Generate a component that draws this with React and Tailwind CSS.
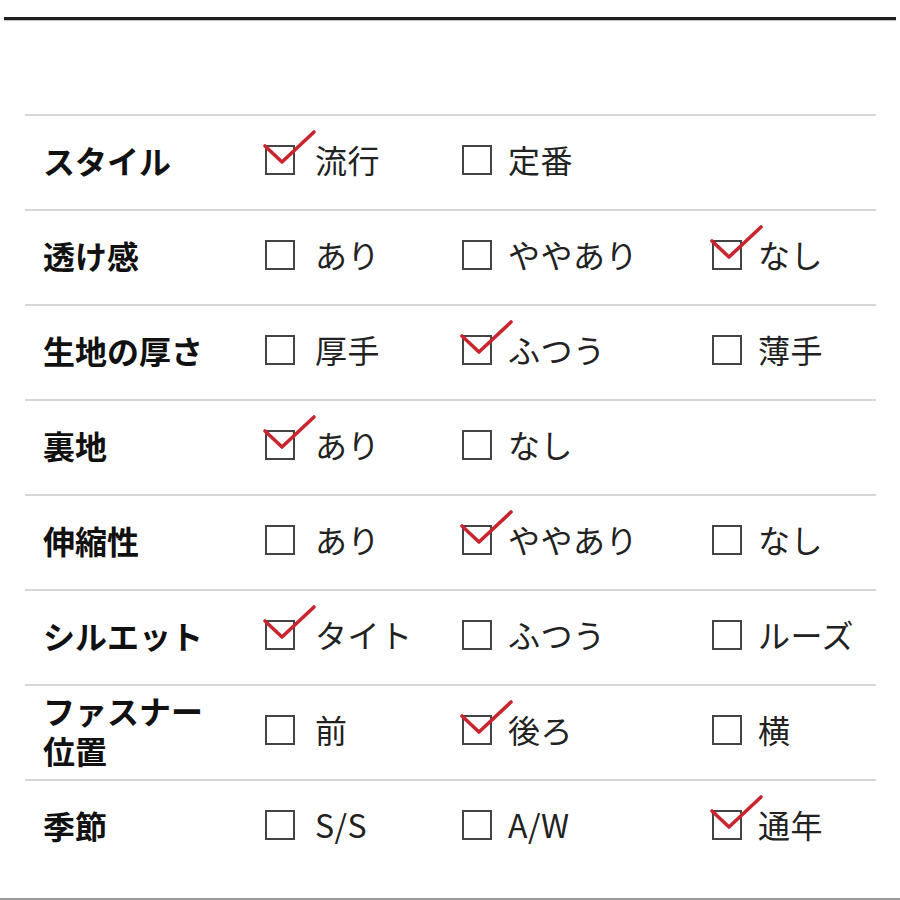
import React from "react";

const rows = [
  { label: ["スタイル"], opts: [["流行", true], ["定番", false]] },
  { label: ["透け感"], opts: [["あり", false], ["ややあり", false], ["なし", true]] },
  { label: ["生地の厚さ"], opts: [["厚手", false], ["ふつう", true], ["薄手", false]] },
  { label: ["裏地"], opts: [["あり", true], ["なし", false]] },
  { label: ["伸縮性"], opts: [["あり", false], ["ややあり", true], ["なし", false]] },
  { label: ["シルエット"], opts: [["タイト", true], ["ふつう", false], ["ルーズ", false]] },
  { label: ["ファスナー", "位置"], opts: [["前", false], ["後ろ", true], ["横", false]] },
  { label: ["季節"], opts: [["S/S", false], ["A/W", false], ["通年", true]] },
];

function Box({ checked }) {
  return (
    <span className="relative inline-block w-[30px] h-[30px] shrink-0 border-[2.5px] border-[#444] bg-white">
      {checked && (
        <svg
          className="absolute left-[-5px] top-[-18px] overflow-visible"
          width="60"
          height="50"
          viewBox="0 0 60 50"
        >
          <path
            d="M3 17 L20 33 L52 3"
            fill="none"
            stroke="#c8262e"
            strokeWidth="3.6"
            strokeLinecap="round"
            strokeLinejoin="round"
          />
        </svg>
      )}
    </span>
  );
}

function Opt({ text, checked, gap }) {
  return (
    <div className={`flex items-center ${gap}`}>
      <Box checked={checked} />
      <span className="text-[32px] leading-none text-[#222] tracking-[0.5px] -translate-y-[1px]">{text}</span>
    </div>
  );
}

export default function App() {
  return (
    <div
      className="w-[900px] h-[900px] bg-white relative overflow-hidden"
      style={{ fontFamily: '"Noto Sans CJK JP", "Noto Sans", sans-serif' }}
    >
      <div className="pt-[17px] px-[4px]">
        <div className="h-[3px] bg-[#1e1e1e] shadow-[0_1px_1px_rgba(0,0,0,0.25)]" />
      </div>
      <div className="mt-[94px] mx-[25px] w-[851px]">
        {rows.map((r, i) => (
          <div
            key={i}
            className="grid grid-cols-[240px_197px_250px_1fr] items-center h-[95px] pb-[6px] border-t-2 border-[#d6d6d6]"
          >
            <div className="pl-[18px] font-bold text-[32px] leading-[40px] text-[#111]">
              {r.label.map((l, j) => (
                <div key={j}>{l}</div>
              ))}
            </div>
            {r.opts.map(([t, c], j) => (
              <Opt key={j} text={t} checked={c} gap={j === 0 ? "gap-[20px]" : "gap-[16px]"} />
            ))}
          </div>
        ))}
      </div>
      <div className="absolute left-0 right-0 bottom-0 h-[2px] bg-[#9a9a9a]" />
    </div>
  );
}
